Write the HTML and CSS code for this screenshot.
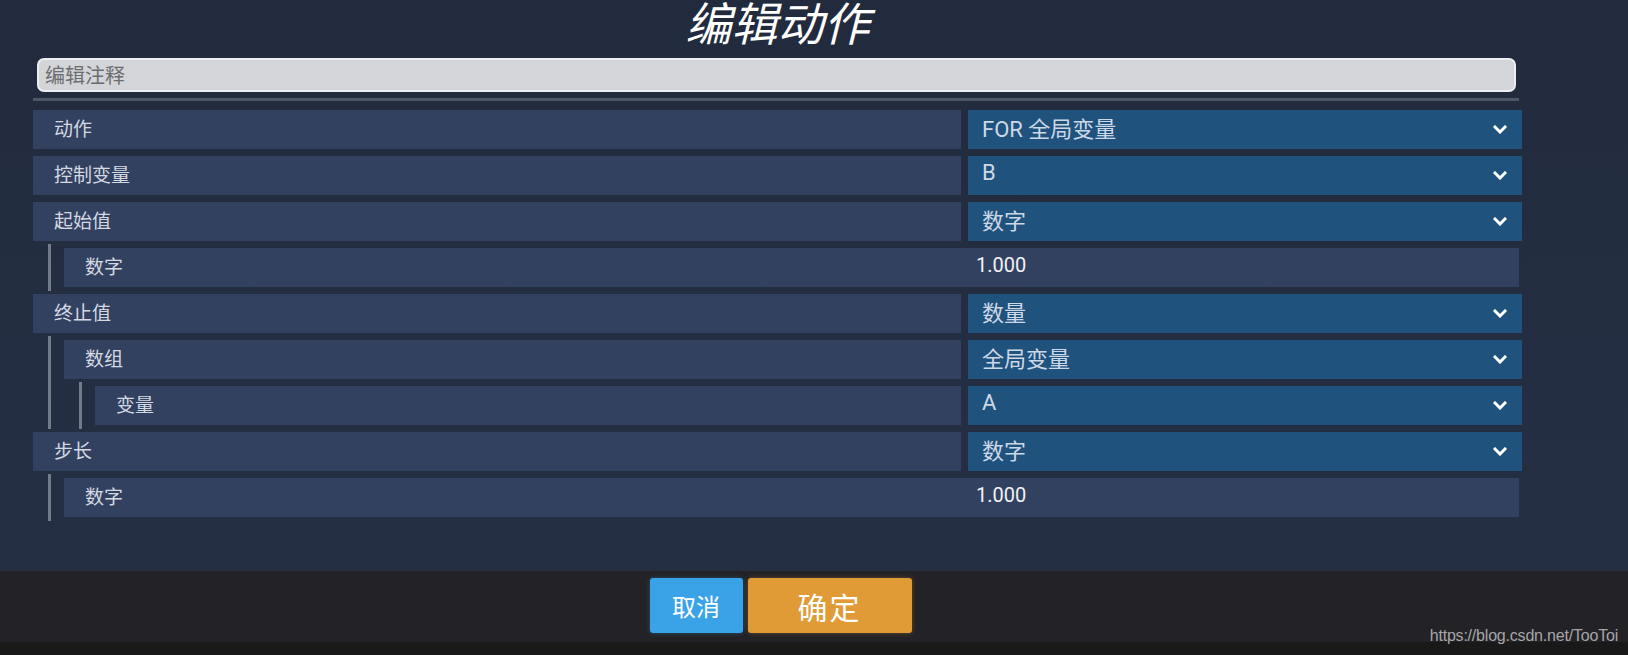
FILE: index.html
```html
<!DOCTYPE html>
<html lang="zh-CN">
<head>
<meta charset="utf-8">
<title>编辑动作</title>
<link rel="stylesheet" href="styles.css">
</head>
<body>
<div class="screen">
  <main class="editor">
    <h1 class="title">编辑动作</h1>
    <input class="comment" type="text" placeholder="编辑注释">
    <div class="sep"></div>
    <div class="rows">
      <div class="row">
        <div class="label">动作</div>
        <div class="select"><span>FOR 全局变量</span><svg class="chev" viewBox="0 0 14 9"><path d="M2 2 L7 7 L12 2"/></svg></div>
      </div>
      <div class="row">
        <div class="label">控制变量</div>
        <div class="select"><span>B</span><svg class="chev" viewBox="0 0 14 9"><path d="M2 2 L7 7 L12 2"/></svg></div>
      </div>
      <div class="row">
        <div class="label">起始值</div>
        <div class="select"><span>数字</span><svg class="chev" viewBox="0 0 14 9"><path d="M2 2 L7 7 L12 2"/></svg></div>
      </div>
      <div class="group">
        <div class="row num">
          <div class="label">数字</div>
          <div class="num-val">1.000</div>
        </div>
      </div>
      <div class="row">
        <div class="label">终止值</div>
        <div class="select"><span>数量</span><svg class="chev" viewBox="0 0 14 9"><path d="M2 2 L7 7 L12 2"/></svg></div>
      </div>
      <div class="group">
        <div class="row">
          <div class="label">数组</div>
          <div class="select"><span>全局变量</span><svg class="chev" viewBox="0 0 14 9"><path d="M2 2 L7 7 L12 2"/></svg></div>
        </div>
        <div class="group">
          <div class="row">
            <div class="label">变量</div>
            <div class="select"><span>A</span><svg class="chev" viewBox="0 0 14 9"><path d="M2 2 L7 7 L12 2"/></svg></div>
          </div>
        </div>
      </div>
      <div class="row">
        <div class="label">步长</div>
        <div class="select"><span>数字</span><svg class="chev" viewBox="0 0 14 9"><path d="M2 2 L7 7 L12 2"/></svg></div>
      </div>
      <div class="group">
        <div class="row num">
          <div class="label">数字</div>
          <div class="num-val">1.000</div>
        </div>
      </div>
    </div>
  </main>
  <footer class="actions">
    <button class="btn btn-cancel">取消</button>
    <button class="btn btn-ok">确定</button>
  </footer>
  <div class="strip"></div>
  <div class="watermark">https://blog.csdn.net/TooToi</div>
</div>
</body>
</html>
```
FILE: styles.css
```css
* { box-sizing: border-box; }
html, body { margin: 0; padding: 0; }
body {
  width: 1628px;
  height: 655px;
  overflow: hidden;
  background: #191919;
  font-family: Roboto, "Noto Sans CJK SC", "Noto Sans", sans-serif;
}
.screen {
  position: relative;
  display: flex;
  flex-direction: column;
  height: 655px;
}
.editor {
  height: 571px;
  padding-left: 33px;
  background: linear-gradient(180deg, #222b3d 0%, #252f44 100%);
  display: flex;
  flex-direction: column;
}
.editor > * { width: 1489px; }
.title {
  margin: 0;
  height: 58px;
  font-size: 46px;
  line-height: 43px;
  font-style: italic;
  font-weight: 400;
  color: #ffffff;
  text-align: center;
  font-family: "Noto Sans CJK SC", "Noto Sans", sans-serif;
}
.comment {
  display: block;
  width: 1479px;
  height: 34px;
  margin: 0 0 0 4px;
  padding: 0 6px 2px;
  background: #d4d5d9;
  border: 2px solid #eceef1;
  border-radius: 7px;
  font-size: 20px;
  font-family: "Noto Sans CJK SC", "Noto Sans", sans-serif;
  color: #333;
  outline: none;
}
.comment::placeholder { color: #6c6d70; }
.sep {
  width: 1486px;
  height: 3px;
  margin-top: 6px;
  margin-bottom: 9px;
  background: #4e5667;
}
.rows {
  display: flex;
  flex-direction: column;
  gap: 7px;
}
.group {
  display: flex;
  flex-direction: column;
  gap: 7px;
  margin: -4px 0 -4px 15px;
  padding: 4px 0 4px 13px;
  border-left: 3px solid #747b88;
}
.row {
  display: grid;
  grid-template-columns: 1fr 554px;
  column-gap: 7px;
  height: 39px;
}
.label {
  display: flex;
  align-items: center;
  padding: 0 0 5px 21px;
  background: #334160;
  color: #d3d9e3;
  font-size: 19px;
  font-family: "Noto Sans CJK SC", "Noto Sans", sans-serif;
}
.select {
  display: flex;
  align-items: center;
  justify-content: space-between;
  padding: 0 15px 0 14px;
  background: #20527e;
  color: #cdd8e6;
  font-size: 22px;
}
.select span { padding-bottom: 6px; }
.chev {
  width: 14px;
  height: 9px;
  flex: none;
}
.chev path {
  fill: none;
  stroke: #ffffff;
  stroke-width: 3;
  stroke-linecap: square;
}
.row.num {
  grid-template-columns: 1fr 551px;
  margin-right: 3px;
  background: #334160;
}
.row.num .label { background: transparent; }
.num-val {
  display: flex;
  align-items: center;
  padding: 0 0 5px 8px;
  color: #f0f2f5;
  font-size: 20px;
}
.actions {
  height: 71px;
  background: #232226;
  display: flex;
  justify-content: center;
  align-items: flex-start;
  gap: 5px;
  padding: 7px 103px 0 36px;
}
.btn {
  height: 55px;
  border: none;
  border-radius: 3px;
  color: #ffffff;
  font-family: "Noto Sans CJK SC", "Noto Sans", sans-serif;
  padding: 0;
  cursor: pointer;
}
.btn-cancel {
  width: 93px;
  background: #3aa3e7;
  font-size: 24px;
  box-shadow: 0 0 5px rgba(58, 163, 231, 0.35);
}
.btn-ok {
  width: 164px;
  background: #e09a36;
  font-size: 30px;
  letter-spacing: 2px;
  box-shadow: 0 0 5px rgba(224, 154, 54, 0.35);
}
.strip {
  flex: 1;
  background: #19191a;
}
.watermark {
  position: absolute;
  right: 10px;
  top: 627px;
  font-family: "Liberation Sans", Arial, sans-serif;
  font-size: 16px;
  color: #a6a6a6;
  letter-spacing: -0.2px;
}
```
